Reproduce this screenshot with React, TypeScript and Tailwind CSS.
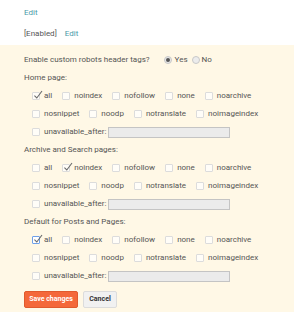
import React from "react";

const font = { fontFamily: "Roboto, 'Liberation Sans', sans-serif" };

function Box({ checked = false, focus = false }: { checked?: boolean; focus?: boolean }) {
  return (
    <span
      className={
        focus
          ? "relative inline-block w-[8px] h-[8px] shrink-0 border border-[#6fa0e8] bg-white rounded-[1px]"
          : "relative inline-block w-[8px] h-[8px] shrink-0 border border-[#dcdcdc] bg-[#fffdf8] rounded-[1px]"
      }
    >
      {checked && (
        <svg className="absolute left-[0px] top-[-3px] w-[10px] h-[10px]" viewBox="0 0 10 10">
          <path d="M1.4 5.6 L3.8 8 L9 1" stroke="#6b6b6b" strokeWidth="1.1" fill="none" />
        </svg>
      )}
    </span>
  );
}

function Item({ label, checked, focus }: { label: string; checked?: boolean; focus?: boolean }) {
  return (
    <span className="flex items-center">
      <Box checked={checked} focus={focus} />
      <span className="ml-[4px]">{label}</span>
    </span>
  );
}

function Section({
  title,
  checked,
  focusAll,
}: {
  title: string;
  checked: string;
  focusAll?: boolean;
}) {
  return (
    <>
      <div className="h-[18px] flex items-center">{title}</div>
      <div className="h-[18px] flex items-center pl-[8px] gap-[10px]">
        <Item label="all" checked={checked === "all"} focus={focusAll} />
        <Item label="noindex" checked={checked === "noindex"} />
        <Item label="nofollow" />
        <Item label="none" />
        <Item label="noarchive" />
      </div>
      <div className="h-[18px] flex items-center pl-[8px] gap-[10px]">
        <Item label="nosnippet" />
        <Item label="noodp" />
        <Item label="notranslate" />
        <Item label="noimageindex" />
      </div>
      <div className="h-[18px] flex items-center pl-[8px]">
        <Box />
        <span className="ml-[4px]">unavailable_after:</span>
        <span className="ml-[2px] w-[122px] h-[11px] bg-[#ebebeb] border border-[#c4c4c4]" />
      </div>
    </>
  );
}

export default function App() {
  return (
    <div className="w-[308px] h-[320px] bg-white text-[8px] text-[#555]" style={font}>
      <div className="pt-[7px] pl-[24px]">
        <div className="h-[12px] flex items-center text-[#4a9aa8]">Edit</div>
        <div className="h-[12px] mt-[9px] flex items-center">
          <span>[Enabled]</span>
          <span className="ml-[8px] text-[#4a9aa8]">Edit</span>
        </div>
      </div>
      <div className="mt-[5px] w-[294px] bg-[#fff8e6] pt-[6px] pb-[4px] pl-[24px]">
        <div className="h-[18px] flex items-center">
          <span>Enable custom robots header tags?</span>
          <span className="ml-[14px] w-[8px] h-[8px] rounded-full border border-[#c8c8c8] bg-[#e8e8e8] flex items-center justify-center">
            <span className="w-[4px] h-[4px] rounded-full bg-[#555]" />
          </span>
          <span className="ml-[3px]">Yes</span>
          <span className="ml-[4px] w-[8px] h-[8px] rounded-full border border-[#c8c8c8] bg-[#ececec]" />
          <span className="ml-[2px]">No</span>
        </div>
        <Section title="Home page:" checked="all" />
        <Section title="Archive and Search pages:" checked="noindex" />
        <Section title="Default for Posts and Pages:" checked="all" focusAll />
        <div className="mt-[6px] flex items-center gap-[5px]">
          <button className="h-[17px] w-[54px] rounded-[2px] bg-[#f4683a] border border-[#e05a2e] text-white font-bold text-[7px]">
            Save changes
          </button>
          <button className="h-[17px] w-[34px] rounded-[2px] bg-[#f1f1f1] border border-[#dcdcdc] text-[#333] font-bold text-[7px]">
            Cancel
          </button>
        </div>
      </div>
    </div>
  );
}
